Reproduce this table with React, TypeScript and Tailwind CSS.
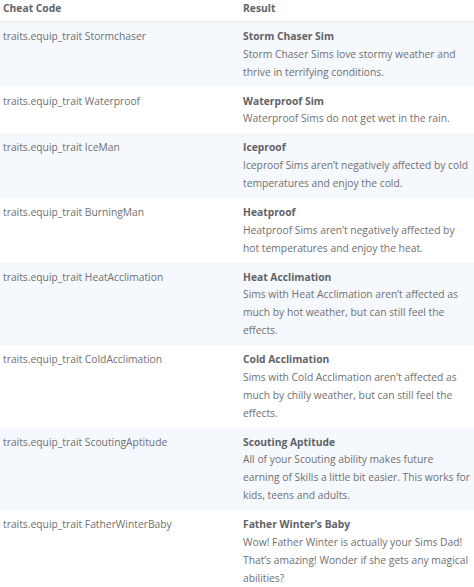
const rows: { code: string; title: string; lines: string[] }[] = [
  {
    code: 'traits.equip_trait Stormchaser',
    title: 'Storm Chaser Sim',
    lines: ['Storm Chaser Sims love stormy weather and', 'thrive in terrifying conditions.'],
  },
  {
    code: 'traits.equip_trait Waterproof',
    title: 'Waterproof Sim',
    lines: ['Waterproof Sims do not get wet in the rain.'],
  },
  {
    code: 'traits.equip_trait IceMan',
    title: 'Iceproof',
    lines: ['Iceproof Sims aren’t negatively affected by cold', 'temperatures and enjoy the cold.'],
  },
  {
    code: 'traits.equip_trait BurningMan',
    title: 'Heatproof',
    lines: ['Heatproof Sims aren’t negatively affected by', 'hot temperatures and enjoy the heat.'],
  },
  {
    code: 'traits.equip_trait HeatAcclimation',
    title: 'Heat Acclimation',
    lines: [
      'Sims with Heat Acclimation aren’t affected as',
      'much by hot weather, but can still feel the',
      'effects.',
    ],
  },
  {
    code: 'traits.equip_trait ColdAcclimation',
    title: 'Cold Acclimation',
    lines: [
      'Sims with Cold Acclimation aren’t affected as',
      'much by chilly weather, but can still feel the',
      'effects.',
    ],
  },
  {
    code: 'traits.equip_trait ScoutingAptitude',
    title: 'Scouting Aptitude',
    lines: [
      'All of your Scouting ability makes future',
      'earning of Skills a little bit easier. This works for',
      'kids, teens and adults.',
    ],
  },
  {
    code: 'traits.equip_trait FatherWinterBaby',
    title: 'Father Winter’s Baby',
    lines: [
      'Wow! Father Winter is actually your Sims Dad!',
      'That’s amazing! Wonder if she gets any magical',
      'abilities?',
    ],
  },
]

export default function App() {
  return (
    <div
      className="h-[587px] w-[474px] overflow-hidden bg-white text-[10.3px] leading-[17.87px] text-[#707070]"
      style={{ fontFamily: '"Open Sans", "Liberation Sans", sans-serif' }}
    >
      {/* header */}
      <div className="grid grid-cols-[237px_1fr] border-b border-[#e6e8eb] pb-[3px] font-bold text-[#5f6368]">
        <div className="pl-[3px]">Cheat Code</div>
        <div className="pl-[6px]">Result</div>
      </div>

      {rows.map((r, i) => (
        <div
          key={r.code}
          className={
            'grid grid-cols-[237px_1fr] pt-[6px] pb-[5px] ' +
            (i % 2 === 0 ? 'bg-[#f5f8fc]' : 'bg-white')
          }
        >
          <div className="pl-[3px]">{r.code}</div>
          <div className="overflow-hidden pl-[6px]">
            <div className="font-bold text-[#5f6368]">{r.title}</div>
            {r.lines.map((l) => (
              <div key={l} className="whitespace-nowrap">
                {l}
              </div>
            ))}
          </div>
        </div>
      ))}
    </div>
  )
}
